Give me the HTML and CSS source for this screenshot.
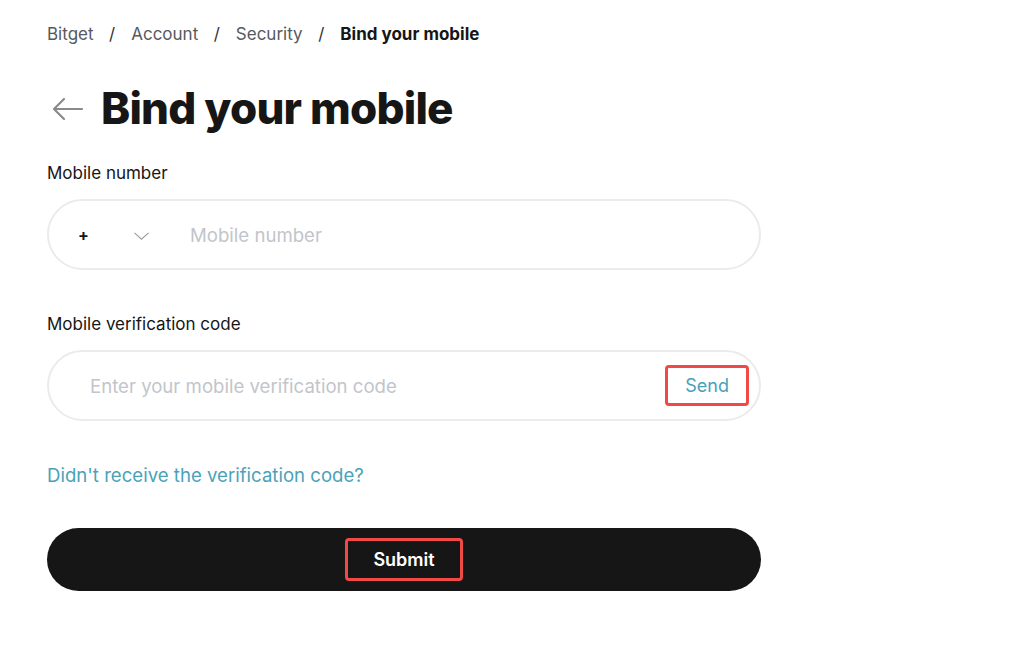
FILE: index.html
```html
<!DOCTYPE html>
<html lang="en">
<head>
<meta charset="utf-8">
<title>Bind your mobile</title>
<link rel="stylesheet" href="styles.css">
</head>
<body>
<main class="page">
  <nav class="crumbs">
    <span class="crumb">Bitget</span>
    <span class="sep">/</span>
    <span class="crumb">Account</span>
    <span class="sep">/</span>
    <span class="crumb">Security</span>
    <span class="sep">/</span>
    <span class="crumb current">Bind your mobile</span>
  </nav>
  <header class="title-row">
    <svg class="back" width="32" height="24" viewBox="0 0 32 24" fill="none" stroke="#8a8a8a" stroke-width="2.2" stroke-linecap="round" stroke-linejoin="round">
      <path d="M30 12H3"/>
      <path d="M12 2L2 12l10 10"/>
    </svg>
    <h1 class="title">Bind your mobile</h1>
  </header>
  <form class="form">
    <label class="label">Mobile number</label>
    <div class="field phone">
      <span class="code">+</span>
      <svg class="chev" width="15" height="8" viewBox="0 0 15 8" fill="none" stroke="#9a9a9a" stroke-width="1.1">
        <path d="M0.5 0.8l7 6.4 7-6.4"/>
      </svg>
      <span class="ph">Mobile number</span>
    </div>
    <label class="label second">Mobile verification code</label>
    <div class="field code-field">
      <span class="ph">Enter your mobile verification code</span>
      <span class="send">Send</span>
    </div>
    <a class="help">Didn't receive the verification code?</a>
    <button type="button" class="submit"><span class="submit-text">Submit</span></button>
  </form>
</main>
</body>
</html>
```
FILE: styles.css
```css
* { box-sizing: border-box; }
html, body { margin: 0; background: #fff; }
body {
  font-family: Inter, "Noto Sans", "Liberation Sans", sans-serif;
  color: #161616;
}
.page {
  padding: 22px 0 0 47px;
  width: 761px;
}
.crumbs {
  display: flex;
  align-items: center;
  font-size: 17px;
  line-height: 24px;
  color: #555a60;
}
.sep { margin: 0 16px 0 15.5px; color: #333; }
.crumb.current { color: #161616; font-weight: 700; }
.title-row {
  display: flex;
  align-items: center;
  gap: 17px;
  margin-top: 36px;
}
.back { margin-left: 5px; margin-top: 2px; }
.title {
  margin: 0;
  font-size: 44px;
  line-height: 52px;
  font-weight: 800;
  letter-spacing: -0.8px;
}
.form { display: flex; flex-direction: column; }
.label {
  font-size: 17px;
  line-height: 22px;
  margin-top: 28px;
  color: #161616;
}
.label.second { margin-top: 43px; }
.field {
  margin-top: 15px;
  height: 71px;
  border: 2px solid #ebebeb;
  border-radius: 36px;
  display: flex;
  align-items: center;
  font-size: 18.6px;
}
.ph { color: #c2c5cb; }
.phone { padding-left: 29px; }
.code { font-size: 16px; font-weight: 700; width: 56px; }
.chev { margin-right: 41px; margin-top: 2px; }
.code-field { padding: 0 10px 0 41px; justify-content: space-between; }
.send {
  color: #48a0b7;
  border: 3px solid #ef4a45;
  border-radius: 4px;
  padding: 6px 17px;
  font-size: 18px;
  line-height: 23px;
}
.help {
  margin-top: 41px;
  font-size: 18.6px;
  line-height: 26px;
  color: #4aa2b9;
  cursor: pointer;
}
.submit {
  margin-top: 40px;
  height: 63px;
  border: none;
  border-radius: 32px;
  background: #161616;
  display: flex;
  align-items: center;
  justify-content: center;
  font-family: inherit;
  padding: 0;
}
.submit-text {
  color: #fff;
  font-size: 18px;
  font-weight: 600;
  border: 3px solid #ef4a45;
  border-radius: 4px;
  padding: 7px 25px;
  line-height: 23px;
}
```
